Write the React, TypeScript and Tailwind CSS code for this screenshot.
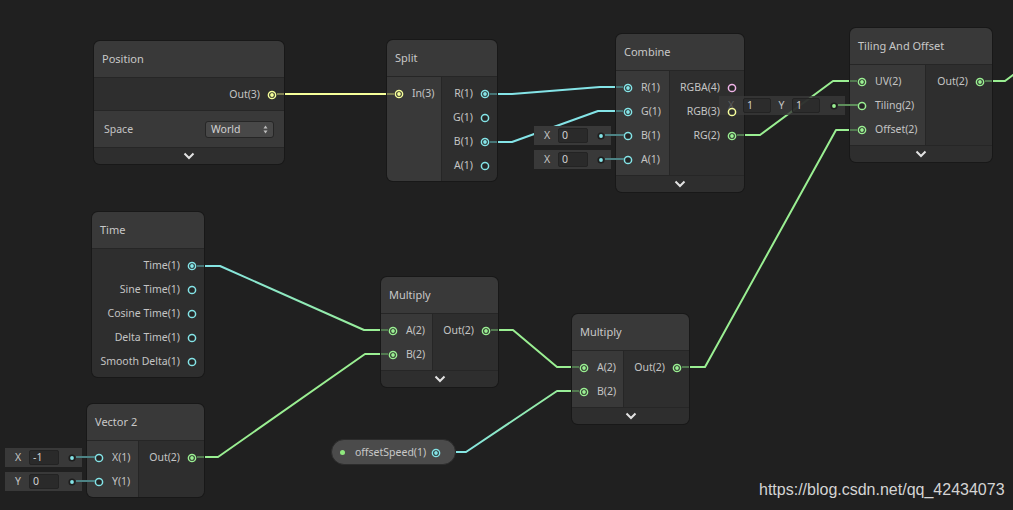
import React from "react";

const CY = "#84e4e7";
const GR = "#9aef92";
const YE = "#f6ff9a";
const PK = "#f0b4e8";

type PortDef = { label: string; color: string; on?: boolean };

function Port({ color, on }: { color: string; on?: boolean }) {
  return (
    <svg width="10" height="10" viewBox="0 0 10 10" className="block shrink-0">
      <circle cx="5" cy="5" r="3.6" fill="#262626" stroke={color} strokeWidth="1.5" />
      {on && <circle cx="5" cy="5" r="1.9" fill={color} />}
    </svg>
  );
}

function Chevron() {
  return (
    <svg width="12" height="8" viewBox="0 0 12 8" className="block">
      <polyline points="1.5,1.5 6,6 10.5,1.5" fill="none" stroke="#e2e2e2" strokeWidth="2" />
    </svg>
  );
}

function Collapse() {
  return (
    <div className="h-[17px] border-t border-[#262626] bg-[#2e2e2e] flex items-center justify-center">
      <Chevron />
    </div>
  );
}

function Title({ text }: { text: string }) {
  return (
    <div className="h-[37px] border-b border-[#262626] bg-[#393939] flex items-center pl-[8px] pt-[1px] text-[11px] text-[#c8c8c8]">
      {text}
    </div>
  );
}

function InRow({ p }: { p: PortDef }) {
  return (
    <div className="h-[24px] flex items-center pl-[7px]">
      <Port color={p.color} on={p.on} />
      <span className="ml-[8px] text-[10.5px] text-[#c4c4c4] whitespace-nowrap">{p.label}</span>
    </div>
  );
}

function OutRow({ p }: { p: PortDef }) {
  return (
    <div className="h-[24px] flex items-center justify-end pr-[7px]">
      <span className="mr-[7px] text-[10.5px] text-[#c4c4c4] whitespace-nowrap">{p.label}</span>
      <Port color={p.color} on={p.on} />
    </div>
  );
}

function Node({
  pos,
  title,
  inW,
  inputs = [],
  outputs = [],
  collapse,
}: {
  pos: string;
  title: string;
  inW?: string;
  inputs?: PortDef[];
  outputs?: PortDef[];
  collapse?: boolean;
}) {
  return (
    <div className={`absolute rounded-[6px] overflow-hidden shadow-[0_0_0_1px_#181818] ${pos}`}>
      <Title text={title} />
      <div className="flex">
        {inputs.length > 0 && (
          <div className={`bg-[#393939] border-r border-[#262626] pt-[5px] pb-[3px] ${inW}`}>
            {inputs.map((p) => (
              <InRow key={p.label} p={p} />
            ))}
          </div>
        )}
        <div className="flex-1 bg-[#2e2e2e] pt-[5px] pb-[3px]">
          {outputs.map((p) => (
            <OutRow key={p.label} p={p} />
          ))}
        </div>
      </div>
      {collapse && <Collapse />}
    </div>
  );
}

function Dot({ color }: { color: string }) {
  return (
    <svg width="8" height="8" viewBox="0 0 8 8" className="block shrink-0">
      <circle cx="4" cy="4" r="3.6" fill="#1e1e1e" />
      <circle cx="4" cy="4" r="1.9" fill={color} />
    </svg>
  );
}

function Field({ pos, label, value, color }: { pos: string; label: string; value: string; color: string }) {
  return (
    <div className={`absolute h-[19px] w-[77px] bg-[#393939] flex items-center ${pos}`}>
      <span className="ml-[6px] w-[14px] text-center text-[10.5px] text-[#c4c4c4]">{label}</span>
      <div className="ml-[4px] w-[30px] h-[15px] bg-[#2a2a2a] border border-[#232323] rounded-[2px] flex items-center pl-[3px] text-[10.5px] text-[#d0d0d0]">
        {value}
      </div>
      <div className="ml-[9px]">
        <Dot color={color} />
      </div>
    </div>
  );
}

export default function App() {
  return (
    <div className="relative w-[1013px] h-[510px] overflow-hidden bg-[#202020] font-['Noto_Sans',sans-serif]">
      {/* edges */}
      <svg className="absolute inset-0" width="1013" height="510" viewBox="0 0 1013 510">
        <defs>
          <linearGradient id="g7" gradientUnits="userSpaceOnUse" x1="204" y1="0" x2="381" y2="0">
            <stop offset="0" stopColor={CY} />
            <stop offset="1" stopColor={GR} />
          </linearGradient>
          <linearGradient id="g10" gradientUnits="userSpaceOnUse" x1="456" y1="0" x2="572" y2="0">
            <stop offset="0" stopColor={CY} />
            <stop offset="1" stopColor={GR} />
          </linearGradient>
        </defs>
        <g fill="none" strokeWidth="2" strokeLinejoin="round">
          <path d="M284,94 L387,94" stroke={YE} />
          <path d="M497,94 L512,94 L600,87 L616,87" stroke={CY} />
          <path d="M497,142 L512,142 L598,111 L616,111" stroke={CY} />
          <path d="M744,135 L760,135 L833,81 L850,81" stroke={GR} />
          <path d="M689,367 L705,367 L836,130 L850,130" stroke={GR} />
          <path d="M992,81 L1005,81 L1025,66" stroke={GR} />
          <path d="M204,266 L220,266 L364,330 L381,330" stroke="url(#g7)" />
          <path d="M204,457 L218,457 L365,354 L381,354" stroke={GR} />
          <path d="M498,330 L513,330 L557,367 L572,367" stroke={GR} />
          <path d="M456,452 L466,452 L557,391 L572,391" stroke="url(#g10)" />
        </g>
      </svg>

      {/* Position */}
      <div className="absolute left-[94px] top-[41px] w-[190px] rounded-[6px] overflow-hidden shadow-[0_0_0_1px_#181818]">
        <Title text="Position" />
        <div className="h-[33px] border-b border-[#262626] bg-[#2e2e2e] pt-[5px]">
          <OutRow p={{ label: "Out(3)", color: YE, on: true }} />
        </div>
        <div className="h-[36px] bg-[#393939] flex items-center justify-between px-[10px] pt-[1px]">
          <span className="text-[10.5px] text-[#c4c4c4]">Space</span>
          <div className="w-[69px] h-[17px] rounded-[3px] border border-[#262626] bg-[#484848] flex items-center justify-between pl-[5px] pr-[5px]">
            <span className="text-[10.5px] text-[#d2d2d2]">World</span>
            <svg width="5" height="9" viewBox="0 0 5 9" className="block">
              <polygon points="2.5,0.5 4.5,3.5 0.5,3.5" fill="#bdbdbd" />
              <polygon points="0.5,5.5 4.5,5.5 2.5,8.5" fill="#bdbdbd" />
            </svg>
          </div>
        </div>
        <Collapse />
      </div>

      <Node
        pos="left-[387px] top-[40px] w-[110px]"
        title="Split"
        inW="w-[55px]"
        inputs={[{ label: "In(3)", color: YE, on: true }]}
        outputs={[
          { label: "R(1)", color: CY, on: true },
          { label: "G(1)", color: CY },
          { label: "B(1)", color: CY, on: true },
          { label: "A(1)", color: CY },
        ]}
      />

      <Node
        pos="left-[616px] top-[34px] w-[128px]"
        title="Combine"
        inW="w-[54px]"
        inputs={[
          { label: "R(1)", color: CY, on: true },
          { label: "G(1)", color: CY, on: true },
          { label: "B(1)", color: CY },
          { label: "A(1)", color: CY },
        ]}
        outputs={[
          { label: "RGBA(4)", color: PK },
          { label: "RGB(3)", color: YE },
          { label: "RG(2)", color: GR, on: true },
        ]}
        collapse
      />

      <Node
        pos="left-[850px] top-[28px] w-[142px]"
        title="Tiling And Offset"
        inW="w-[76px]"
        inputs={[
          { label: "UV(2)", color: GR, on: true },
          { label: "Tiling(2)", color: GR },
          { label: "Offset(2)", color: GR, on: true },
        ]}
        outputs={[{ label: "Out(2)", color: GR, on: true }]}
        collapse
      />

      <Node
        pos="left-[92px] top-[212px] w-[112px]"
        title="Time"
        outputs={[
          { label: "Time(1)", color: CY, on: true },
          { label: "Sine Time(1)", color: CY },
          { label: "Cosine Time(1)", color: CY },
          { label: "Delta Time(1)", color: CY },
          { label: "Smooth Delta(1)", color: CY },
        ]}
      />

      <Node
        pos="left-[381px] top-[277px] w-[117px]"
        title="Multiply"
        inW="w-[52px]"
        inputs={[
          { label: "A(2)", color: GR, on: true },
          { label: "B(2)", color: GR, on: true },
        ]}
        outputs={[{ label: "Out(2)", color: GR, on: true }]}
        collapse
      />

      <Node
        pos="left-[572px] top-[314px] w-[117px]"
        title="Multiply"
        inW="w-[52px]"
        inputs={[
          { label: "A(2)", color: GR, on: true },
          { label: "B(2)", color: GR, on: true },
        ]}
        outputs={[{ label: "Out(2)", color: GR, on: true }]}
        collapse
      />

      <Node
        pos="left-[87px] top-[404px] w-[117px]"
        title="Vector 2"
        inW="w-[52px]"
        inputs={[
          { label: "X(1)", color: CY },
          { label: "Y(1)", color: CY },
        ]}
        outputs={[{ label: "Out(2)", color: GR, on: true }]}
      />

      {/* inline fields */}
      <Field pos="left-[534px] top-[126px]" label="X" value="0" color={CY} />
      <Field pos="left-[534px] top-[150px]" label="X" value="0" color={CY} />
      <Field pos="left-[5px] top-[448px]" label="X" value="-1" color={CY} />
      <Field pos="left-[5px] top-[472px]" label="Y" value="0" color={CY} />

      <div className="absolute left-[719px] top-[96px] h-[19px] flex items-center">
        <div className="w-[24px] h-[19px] bg-white/[0.04] flex items-center justify-center">
          <span className="text-[10.5px] text-[#c4c4c4] opacity-25">X</span>
        </div>
        <div className="h-[19px] w-[102px] bg-[#3a3a3a]/80 flex items-center">
          <div className="w-[28px] h-[15px] bg-[#2a2a2a]/80 border border-[#232323] rounded-[2px] flex items-center pl-[3px] text-[10.5px] text-[#d0d0d0]">
            1
          </div>
          <span className="w-[21px] text-center text-[10.5px] text-[#c4c4c4]">Y</span>
          <div className="w-[28px] h-[15px] bg-[#2a2a2a]/80 border border-[#232323] rounded-[2px] flex items-center pl-[3px] text-[10.5px] text-[#d0d0d0]">
            1
          </div>
          <div className="ml-[10px]">
            <Dot color={GR} />
          </div>
        </div>
      </div>

      {/* property pill */}
      <div className="absolute left-[331px] top-[439px] w-[125px] h-[26px] rounded-full bg-[#4b4b4b] border border-[#2c2c2c] flex items-center pl-[8px] pr-[14px] pt-[1px]">
        <span className="w-[5px] h-[5px] rounded-full bg-[#8fe87e]" />
        <span className="ml-[10px] text-[10.5px] text-[#c8c8c8] whitespace-nowrap">offsetSpeed(1)</span>
        <span className="ml-auto">
          <Port color={CY} on />
        </span>
      </div>

      {/* stubs and field wires */}
      <svg className="absolute inset-0 pointer-events-none" width="1013" height="510" viewBox="0 0 1013 510">
        <g strokeWidth="2" fill="none">
          <path d="M277,94 L284,94" stroke="#7d7f52" />
          <path d="M387,94 L394,94" stroke="#7d7f52" />
          <path d="M490,94 L497,94 M490,142 L497,142" stroke="#467475" />
          <path d="M616,87 L623,87 M616,111 L623,111" stroke="#467475" />
          <path d="M737,135 L744,135" stroke="#527a50" />
          <path d="M850,81 L857,81 M850,130 L857,130 M985,81 L992,81" stroke="#527a50" />
          <path d="M197,266 L204,266" stroke="#467475" />
          <path d="M381,330 L388,330 M381,354 L388,354 M491,330 L498,330" stroke="#527a50" />
          <path d="M572,367 L579,367 M572,391 L579,391 M682,367 L689,367" stroke="#527a50" />
          <path d="M197,457 L204,457" stroke="#527a50" />
          <path d="M76,457 L95,457 M76,481 L95,481" stroke="#4d8385" />
          <path d="M605,135 L624,135 M605,159 L624,159" stroke="#4d8385" />
          <path d="M838,105 L858,105" stroke="#5e8f5b" />
        </g>
      </svg>

      <div className="absolute left-[759px] top-[482px] text-[16px] leading-none text-[#d4d4d4] font-['Liberation_Sans',Arial,sans-serif]">
        https://blog.csdn.net/qq_42434073
      </div>
    </div>
  );
}
